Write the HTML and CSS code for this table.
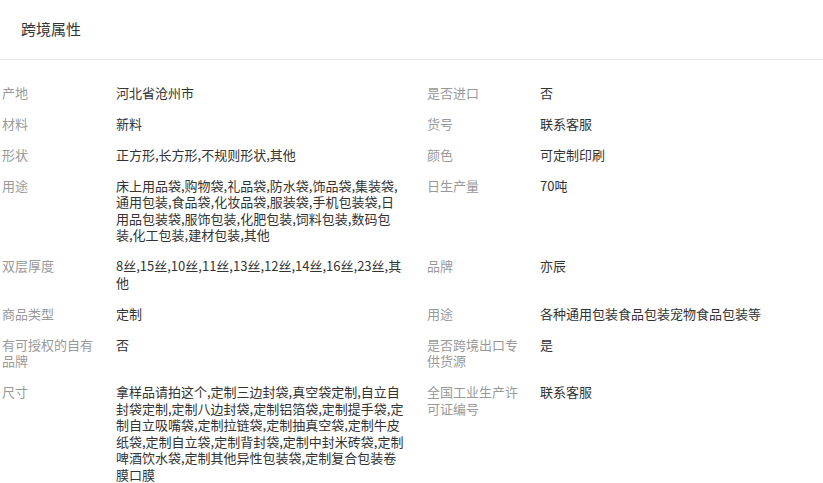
FILE: index.html
```html
<!DOCTYPE html>
<html lang="zh-CN">
<head>
<meta charset="utf-8">
<title>跨境属性</title>
<link rel="stylesheet" href="styles.css">
</head>
<body>
<section class="panel">
  <header class="panel-head">
    <h2 class="panel-title">跨境属性</h2>
  </header>
  <div class="attrs">
    <div class="label">产地</div><div class="value">河北省沧州市</div>
    <div class="label">是否进口</div><div class="value">否</div>

    <div class="label">材料</div><div class="value">新料</div>
    <div class="label">货号</div><div class="value">联系客服</div>

    <div class="label">形状</div><div class="value">正方形,长方形,不规则形状,其他</div>
    <div class="label">颜色</div><div class="value">可定制印刷</div>

    <div class="label">用途</div><div class="value">床上用品袋,购物袋,礼品袋,防水袋,饰品袋,集装袋,通用包装,食品袋,化妆品袋,服装袋,手机包装袋,日用品包装袋,服饰包装,化肥包装,饲料包装,数码包装,化工包装,建材包装,其他</div>
    <div class="label">日生产量</div><div class="value">70吨</div>

    <div class="label">双层厚度</div><div class="value">8丝,15丝,10丝,11丝,13丝,12丝,14丝,16丝,23丝,其他</div>
    <div class="label">品牌</div><div class="value">亦辰</div>

    <div class="label">商品类型</div><div class="value">定制</div>
    <div class="label">用途</div><div class="value">各种通用包装食品包装宠物食品包装等</div>

    <div class="label">有可授权的自有品牌</div><div class="value">否</div>
    <div class="label">是否跨境出口专供货源</div><div class="value">是</div>

    <div class="label">尺寸</div><div class="value">拿样品请拍这个,定制三边封袋,真空袋定制,自立自封袋定制,定制八边封袋,定制铝箔袋,定制提手袋,定制自立吸嘴袋,定制拉链袋,定制抽真空袋,定制牛皮纸袋,定制自立袋,定制背封袋,定制中封米砖袋,定制啤酒饮水袋,定制其他异性包装袋,定制复合包装卷膜口膜</div>
    <div class="label">全国工业生产许可证编号</div><div class="value">联系客服</div>
  </div>
</section>
</body>
</html>
```

FILE: styles.css
```css
html, body {
  margin: 0;
  padding: 0;
  background: #ffffff;
}

body {
  font-family: "Noto Sans CJK SC", "Noto Sans", sans-serif;
  color: #333333;
}

.panel {
  width: 823px;
}

.panel-head {
  height: 60px;
  box-sizing: border-box;
  padding: 19px 0 0 21px;
  border-bottom: 1px solid #e6e6e6;
}

.panel-title {
  margin: 0;
  font-size: 15px;
  line-height: 20px;
  font-weight: normal;
  color: #333333;
}

.attrs {
  display: grid;
  grid-template-columns: 114px 311px 113px 1fr;
  row-gap: 14.5px;
  padding: 24.75px 0 0 2px;
  font-size: 13px;
  line-height: 16.5px;
}

.label {
  color: #999999;
  padding-right: 14px;
}

.value {
  color: #333333;
  padding-right: 22px;
}
```
